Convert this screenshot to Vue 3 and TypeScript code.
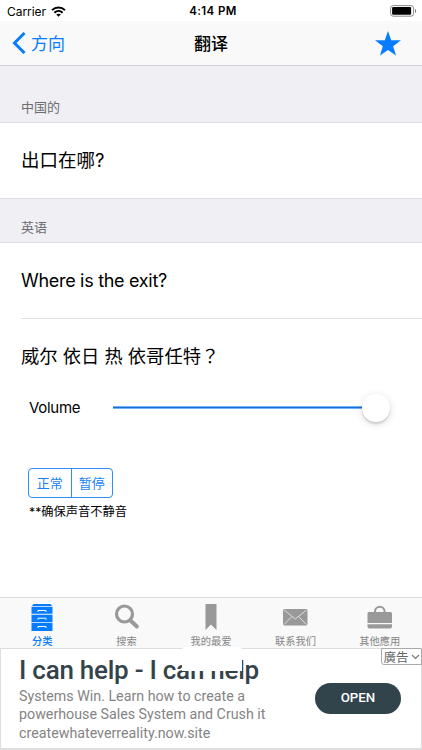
<script setup lang="ts">
interface Tab { id: string; label: string }
const tabs: Tab[] = [
  { id: 'categories', label: '分类' },
  { id: 'search', label: '搜索' },
  { id: 'favorites', label: '我的最爱' },
  { id: 'contact', label: '联系我们' },
  { id: 'apps', label: '其他應用' },
]
const active = 'categories'
</script>

<template>
  <div class="screen">
    <header class="status">
      <div class="carrier">
        <span>Carrier</span>
        <svg width="15" height="11" viewBox="0 0 15 11" fill="none" stroke="#000" stroke-width="2">
          <path d="M1 4.1C4.7.5 10.3.5 14 4.1M3.4 6.7c2.4-2.2 5.8-2.2 8.2 0" />
          <path d="M7.5 10.8 5.2 8.6c1.3-1.2 3.3-1.2 4.6 0z" fill="#000" stroke="none" />
        </svg>
      </div>
      <strong>4:14 PM</strong>
      <svg class="battery" width="27" height="12" viewBox="0 0 27 12">
        <rect x=".6" y=".6" width="23" height="10.6" rx="2.6" fill="#fff" stroke="#888" />
        <rect x="2.1" y="2.1" width="19" height="7.6" rx="1" />
        <path d="M25 4v4c1.600-.6 1.600-3.400 0-4" fill="#777" />
      </svg>
    </header>
    <nav class="nav">
      <div class="back">
        <svg width="14" height="22" viewBox="0 0 14 22"><path d="M12.500 1 2.500 11l10 10" fill="none" stroke="#087cff" stroke-width="3" /></svg>
        <span>方向</span>
      </div>
      <h1>翻译</h1>
      <svg class="star" width="26" height="25" viewBox="0 0 26 25"><path d="m13 0 3.200 9.300H26l-7.800 5.900L21 24.500l-8-5.600-8 5.600 2.800-9.300L0 9.300h9.800z" fill="#087cff" /></svg>
    </nav>
    <main>
      <h2 class="section first">中国的</h2>
      <p class="phrase source">出口在哪?</p>
      <h2 class="section second">英语</h2>
      <p class="phrase english">Where is the exit?</p>
      <div class="divider"></div>
      <p class="phrase phonetic">威尔 依日 热 依哥任特<span class="fullwidth">？</span></p>
      <div class="volume">
        <span>Volume</span>
        <div class="track"><i></i></div>
      </div>
      <div class="playback"><button>正常</button><button>暂停</button></div>
      <p class="note">**确保声音不静音</p>
    </main>
    <nav class="tabs">
      <div v-for="tab in tabs" :key="tab.id" class="tab" :class="{ active: tab.id === active }">
        <svg v-if="tab.id === 'categories'" width="22" height="27" viewBox="0 0 22 27">
          <path d="M2.500 0h17l1.500 2H1zM.5 2.800h21v7H.5zM.5 10.700h21v7.200H.5zM.5 18.800h21V27H.5z" fill="currentColor" />
          <path d="M7 8V6.500h8V8M7 15.700v-1.500h8v1.500M7 24v-1.500h8V24" fill="none" stroke="#fff" />
        </svg>
        <svg v-else-if="tab.id === 'search'" width="26" height="27" viewBox="0 0 26 27" fill="none" stroke="currentColor">
          <circle cx="10.500" cy="10" r="8" stroke-width="3.200" /><path d="m16.500 16.500 6.300 6" stroke-width="4" stroke-linecap="round" />
        </svg>
        <svg v-else-if="tab.id === 'favorites'" width="12" height="27" viewBox="0 0 12 27"><path d="M.5 0h11v26L6 20.500.5 26z" fill="currentColor" /></svg>
        <svg v-else-if="tab.id === 'contact'" width="25" height="27" viewBox="0 0 25 27">
          <rect y="5" width="24.500" height="16.500" rx="1.500" fill="currentColor" /><path d="m1 6 11.300 9L23.500 6M1 20.500l8-8m14.500 8-8-8" fill="none" stroke="#e5e5e5" stroke-width=".9" />
        </svg>
        <svg v-else width="26" height="27" viewBox="0 0 26 27">
          <path d="M1.500 8h22q1.500 0 1.500 1.500V19H.5V9.500Q.5 8 1.500 8M.5 20.200H25v2.300q0 2-2 2H2.500q-2 0-2-2z" fill="currentColor" /><path d="M8 9.500V7.500a4.800 4.800 0 0 1 9.600 0v2" fill="none" stroke="currentColor" stroke-width="2" />
        </svg>
        <span>{{ tab.label }}</span>
      </div>
    </nav>
    <aside class="ad">
      <div class="copy">
        <h3>I can help - I can help</h3>
        <p>Systems Win. Learn how to create a<br>powerhouse Sales System and Crush it<br>createwhateverreality.now.site</p>
      </div>
      <button class="open">OPEN</button>
      <div class="mask"></div>
      <div class="ad-label"><span>廣告</span><svg width="9" height="6" viewBox="0 0 9 6"><path d="m1 1 3.500 3.500L8 1" fill="none" stroke="#777" stroke-width="1.200" /></svg></div>
    </aside>
  </div>
</template>

<style>
body { overflow: hidden; background: #fff; }
</style>
<style scoped>
* { box-sizing: border-box; }
h1, h2, h3, p { margin: 0; }
svg { display: block; flex: none; }
button { font: inherit; border: 0; background: none; padding: 0; }
.screen { width: 422px; height: 750px; overflow: hidden; display: flex; flex-direction: column; background: #fff; color: #000; font-family: Inter, "Noto Sans CJK SC", sans-serif; }
.status { height: 21px; flex: none; padding: 1px 5px 0 7px; display: grid; grid-template-columns: 1fr auto 1fr; align-items: center; font-size: 12px; }
.status strong { font-size: 11.500px; font-weight: 600; letter-spacing: .4px; margin-left: 2px; }
.carrier { display: flex; gap: 5px; align-items: center; letter-spacing: -.05px; }
.battery { justify-self: end; }
.nav { height: 45px; flex: none; background: #f9f9f9; border-bottom: 1px solid #cfcfd4; padding: 0 21px 0 12px; display: grid; grid-template-columns: 1fr auto 1fr; align-items: center; }
.back { display: flex; gap: 5px; align-items: center; color: #087cff; font-size: 17px; }
.back span, .nav h1 { padding-bottom: 2px; }
.nav h1 { font-size: 17px; font-weight: 500; margin-left: 9px; }
.star { justify-self: end; }
main { height: 531px; flex: none; }
.section { background: #efeff4; color: #6d6d72; font-size: 13px; line-height: 20px; font-weight: 400; padding-left: 21px; border-bottom: 1px solid #dfdfe3; }
.first { height: 57px; padding-top: 31px; }
.second { height: 45px; padding-top: 18px; border-top: 1px solid #dfdfe3; }
.phrase { padding-left: 21px; font-size: 18px; display: flex; align-items: center; white-space: pre; }
.source { height: 75px; padding-bottom: 3px; font-size: 18.500px; }
.english { height: 75px; letter-spacing: -.3px; }
.divider { height: 1px; margin-left: 21px; background: #e2e2e5; }
.phonetic { height: 75px; padding-bottom: 4px; font-size: 18.300px; }
.fullwidth { font-family: "Noto Sans CJK TC", sans-serif; }
.volume { display: flex; align-items: center; height: 27px; padding-left: 29px; font-size: 15px; letter-spacing: -.3px; }
.volume span { width: 84px; padding-bottom: 1px; }
.track { width: 263px; height: 3px; background: #1c6fd0; border: solid #70b2ff; border-width: 1px 0; display: flex; align-items: center; justify-content: flex-end; }
.track i { width: 28px; height: 28px; flex: none; margin-right: -14px; border-radius: 50%; background: #fff; box-shadow: 0 2px 2px #0002, 0 2px 8px #0002; }
.playback { width: 85px; height: 30px; margin: 47px 0 0 28px; border: 1px solid #2e8df8; border-radius: 4px; display: grid; grid-template-columns: 1fr 1fr; color: #187ff5; font-size: 13px; }
.playback button { color: inherit; padding-bottom: 2px; }
.playback button + button { border-left: 1px solid #2e8df8; }
.note { margin: 4px 0 0 29px; font-size: 12.250px; line-height: 20px; }
.tabs { height: 51px; flex: none; display: grid; grid-template-columns: repeat(5, 1fr); background: #f9f9f9; border-top: 1px solid #dcdcdd; padding-top: 6px; }
.tab { display: flex; flex-direction: column; align-items: center; color: #999; font-size: 10.250px; }
.tab span { line-height: 14px; margin-top: 3px; color: #858585; }
.tab.active, .tab.active span { color: #087cff; }
.tab.active span { font-weight: 500; }
.ad { height: 102px; flex: none; position: relative; display: flex; justify-content: space-between; border: 1px solid #dedede; border-bottom-width: 2px; font-family: Roboto, sans-serif; background: #fff; }
.copy { padding: 5px 0 0 18px; white-space: nowrap; }
.copy h3 { font-size: 26px; line-height: 32px; font-weight: 500; letter-spacing: -.25px; color: #34424a; }
.copy p { font-size: 14.250px; line-height: 18.300px; color: #848484; margin-top: 1px; }
.open { width: 86px; height: 31px; border-radius: 16px; margin: 34px 20px 0 0; padding-bottom: 2px; background: #31434b; color: #fff; font-size: 13.300px; font-weight: 500; }
.mask { position: absolute; left: 181px; top: -2px; width: 60px; height: 24px; background: #fff; }
.ad-label { position: absolute; top: -1px; right: -1px; width: 41px; height: 17px; border: 1px solid #aaa; border-bottom-left-radius: 3px; background: #fff; color: #666; display: flex; align-items: center; justify-content: center; gap: 2px; font: 12.500px "Noto Sans CJK TC", sans-serif; }
.ad-label span { padding-bottom: 1px; }
</style>
